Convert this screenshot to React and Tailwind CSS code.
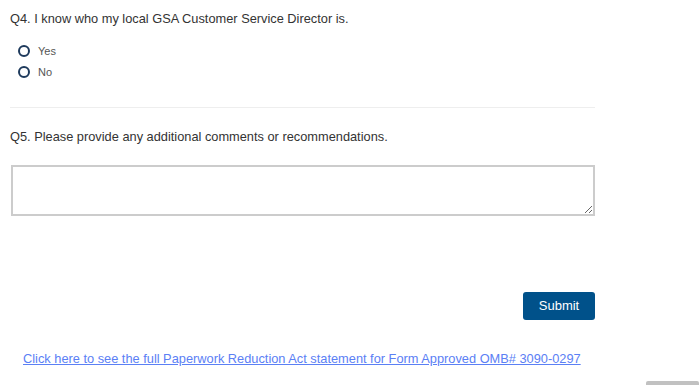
export default function App() {
  return (
    <div className="relative w-[699px] h-[385px] overflow-hidden bg-white font-['Liberation_Sans',Arial,sans-serif]">
      <div className="w-[585px] ml-[10px] pt-[11px]">
        <p className="text-[12.8px] leading-[16px] text-[#333]">
          Q4. I know who my local GSA Customer Service Director is.
        </p>
        <div className="mt-[18px] ml-[8px] flex flex-col gap-[9px]">
          {["Yes", "No"].map((opt) => (
            <label key={opt} className="flex items-center gap-[8px] h-[12px]">
              <span className="w-[12px] h-[12px] rounded-full border-[2.5px] border-[#1e3a5c]" />
              <span className="text-[11px] leading-[12px] text-[#555]">{opt}</span>
            </label>
          ))}
        </div>
        <hr className="mt-[29px] border-t border-[#eee]" />
        <p className="mt-[21px] text-[12.8px] leading-[16px] text-[#333]">
          Q5. Please provide any additional comments or recommendations.
        </p>
        <textarea className="mt-[20px] ml-px block w-[584px] h-[51px] border-2 border-[#ccc] resize-y" />
        <div className="mt-[76px] flex justify-end">
          <button className="w-[72px] h-[28px] rounded-[3px] bg-[#00518a] text-white text-[13px]">
            Submit
          </button>
        </div>
      </div>
      <div className="mt-[26px] ml-[23px]">
        <a href="#" className="text-[12.8px] text-[#5b80f5] underline">
          Click here to see the full Paperwork Reduction Act statement for Form Approved OMB# 3090-0297
        </a>
      </div>
      <div className="absolute left-[646px] bottom-0 w-[53px] h-[4px] rounded-t-[2px] bg-[#c1c1c1]" />
    </div>
  );
}
